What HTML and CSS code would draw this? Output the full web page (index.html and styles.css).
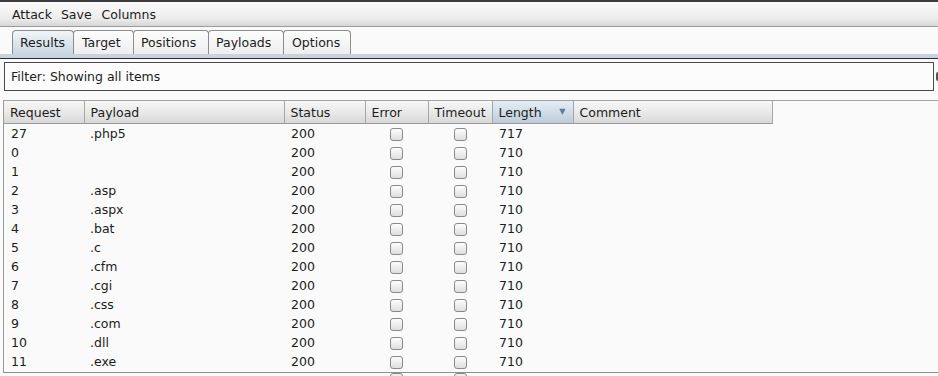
FILE: index.html
```html
<!DOCTYPE html>
<html lang="en">
<head>
    <title>Intruder attack</title>
    <meta charset="utf-8">
    <link rel="stylesheet" href="styles.css">
</head>
<body>
    <div class="topline"></div>

    <div class="menubar">
        <span class="menu-item">Attack</span>
        <span class="menu-item">Save</span>
        <span class="menu-item">Columns</span>
    </div>

    <div class="tabbar">
        <div class="tab tab-results selected">Results</div>
        <div class="tab tab-target">Target</div>
        <div class="tab tab-positions">Positions</div>
        <div class="tab tab-payloads">Payloads</div>
        <div class="tab tab-options">Options</div>
    </div>
    <div class="tabline"></div>

    <div class="filter-row">
        <div class="filter">Filter: Showing all items</div>
        <div class="filter-edge"></div>
    </div>

    <div class="results">
        <table class="grid">
            <colgroup>
                <col class="c-req"><col class="c-pay"><col class="c-status"><col class="c-err"><col class="c-tmo"><col class="c-len"><col class="c-com">
            </colgroup>
            <thead>
                <tr>
                    <th>Request</th>
                    <th>Payload</th>
                    <th>Status</th>
                    <th>Error</th>
                    <th>Timeout</th>
                    <th class="sorted">Length <span class="arrow">&#9660;</span></th>
                    <th>Comment</th>
                </tr>
            </thead>
            <tbody>
                <tr><td>27</td><td>.php5</td><td>200</td><td class="chk"><span class="box"></span></td><td class="chk"><span class="box"></span></td><td>717</td><td></td></tr>
                <tr><td>0</td><td></td><td>200</td><td class="chk"><span class="box"></span></td><td class="chk"><span class="box"></span></td><td>710</td><td></td></tr>
                <tr><td>1</td><td></td><td>200</td><td class="chk"><span class="box"></span></td><td class="chk"><span class="box"></span></td><td>710</td><td></td></tr>
                <tr><td>2</td><td>.asp</td><td>200</td><td class="chk"><span class="box"></span></td><td class="chk"><span class="box"></span></td><td>710</td><td></td></tr>
                <tr><td>3</td><td>.aspx</td><td>200</td><td class="chk"><span class="box"></span></td><td class="chk"><span class="box"></span></td><td>710</td><td></td></tr>
                <tr><td>4</td><td>.bat</td><td>200</td><td class="chk"><span class="box"></span></td><td class="chk"><span class="box"></span></td><td>710</td><td></td></tr>
                <tr><td>5</td><td>.c</td><td>200</td><td class="chk"><span class="box"></span></td><td class="chk"><span class="box"></span></td><td>710</td><td></td></tr>
                <tr><td>6</td><td>.cfm</td><td>200</td><td class="chk"><span class="box"></span></td><td class="chk"><span class="box"></span></td><td>710</td><td></td></tr>
                <tr><td>7</td><td>.cgi</td><td>200</td><td class="chk"><span class="box"></span></td><td class="chk"><span class="box"></span></td><td>710</td><td></td></tr>
                <tr><td>8</td><td>.css</td><td>200</td><td class="chk"><span class="box"></span></td><td class="chk"><span class="box"></span></td><td>710</td><td></td></tr>
                <tr><td>9</td><td>.com</td><td>200</td><td class="chk"><span class="box"></span></td><td class="chk"><span class="box"></span></td><td>710</td><td></td></tr>
                <tr><td>10</td><td>.dll</td><td>200</td><td class="chk"><span class="box"></span></td><td class="chk"><span class="box"></span></td><td>710</td><td></td></tr>
                <tr><td>11</td><td>.exe</td><td>200</td><td class="chk"><span class="box"></span></td><td class="chk"><span class="box"></span></td><td>710</td><td></td></tr>
            </tbody>
        </table>
    </div>
    <div class="peek">
        <span class="peek-box peek-err"></span>
        <span class="peek-box peek-tmo"></span>
    </div>
</body>
</html>
```

FILE: styles.css
```css
body {
    margin: 0;
    background-color: #fafafa;
    font-family: "DejaVu Sans", sans-serif;
    font-size: 12.5px;
    color: #1c1c1c;
    overflow: hidden;
    height: 376px;
}

.topline {
    height: 2px;
    background-color: #3c3c40;
}

/* menu */
.menubar {
    height: 24px;
    display: flex;
    align-items: center;
    padding-left: 12px;
    gap: 9px;
    background: linear-gradient(#fbfbfb, #ececec 70%, #d6d6d6);
    border-bottom: 1px solid #9c9c9c;
}

.menu-item:last-child {
    margin-left: 1px;
}

/* tabs */
.tabbar {
    display: flex;
    align-items: flex-end;
    height: 27px;
    padding-left: 12px;
    background-color: #fafafa;
}

.tab {
    box-sizing: border-box;
    height: 24px;
    margin-right: -1px;
    padding-left: 7px;
    line-height: 23px;
    border: 1px solid #8c8c8c;
    border-bottom: none;
    border-radius: 4px 4px 0 0;
    background: linear-gradient(#fdfdfd, #eeeeee);
}

.tab.selected {
    background: linear-gradient(#f2f5f8, #c9d6e3);
}

.tab-results { width: 62px; }
.tab-target { width: 61px; padding-left: 8px; }
.tab-positions { width: 76px; }
.tab-payloads { width: 76px; }
.tab-options { width: 68px; padding-left: 8px; }

.tabline {
    height: 4px;
    background-color: #c7d3df;
    border-bottom: 1px solid #2a2c34;
}

/* filter */
.filter-row {
    display: flex;
    align-items: center;
    padding: 3px 0 0 4px;
}

.filter {
    flex: 1;
    box-sizing: border-box;
    height: 29px;
    line-height: 27px;
    padding-left: 6px;
    border: 1px solid #4a4a4a;
    background-color: #fcfcfc;
}

.filter-edge {
    width: 2px;
    height: 9px;
    margin-left: 2px;
    background-color: #555;
    border-radius: 2px 0 0 2px;
}

/* results table */
.results {
    margin-top: 9px;
    margin-left: 3px;
    height: 271px;
    overflow: hidden;
    border-top: 1px solid #a4a4a4;
    border-left: 1px solid #9a9a9a;
    border-bottom: 1px solid #8e8e8e;
    margin-right: -3px;
}

.grid {
    table-layout: fixed;
    border-collapse: collapse;
    width: 768px;
}

.c-req { width: 80px; }
.c-pay { width: 200px; }
.c-status { width: 81px; }
.c-err { width: 63px; }
.c-tmo { width: 64px; }
.c-len { width: 81px; }
.c-com { width: 199px; }

.grid th {
    height: 22px;
    padding: 0 0 0 6px;
    text-align: left;
    font-weight: normal;
    background: linear-gradient(#f7f7f7, #e6e6e6 60%, #d8d8d8);
    border-right: 1px solid #a6a6a6;
    border-bottom: 1px solid #9a9a9a;
    white-space: nowrap;
}

.grid th.sorted {
    position: relative;
    background: linear-gradient(#e6edf4, #ccd9e6 60%, #bccbdb);
}

.arrow {
    position: absolute;
    right: 7px;
    top: 6px;
    font-size: 8px;
    color: #5b7d9e;
}

.grid td {
    height: 19px;
    padding: 0 0 0 7px;
    white-space: nowrap;
}

.grid td:nth-child(2) {
    padding-left: 6px;
}

.grid td.chk {
    padding: 0;
    text-align: center;
}

.box {
    display: inline-block;
    box-sizing: border-box;
    width: 13px;
    height: 13px;
    vertical-align: middle;
    border: 1px solid #8a8a8a;
    border-radius: 3px;
    background: linear-gradient(#fdfdfd, #dedede);
}

/* row under the scroll edge */
.peek {
    position: relative;
    height: 3px;
    overflow: hidden;
}

.peek-box {
    position: absolute;
    top: 0;
    width: 13px;
    height: 6px;
    box-sizing: border-box;
    border: 1px solid #8a8a8a;
    border-radius: 3px;
    background: #ececec;
}

.peek-err { left: 390px; }
.peek-tmo { left: 454px; }
```
